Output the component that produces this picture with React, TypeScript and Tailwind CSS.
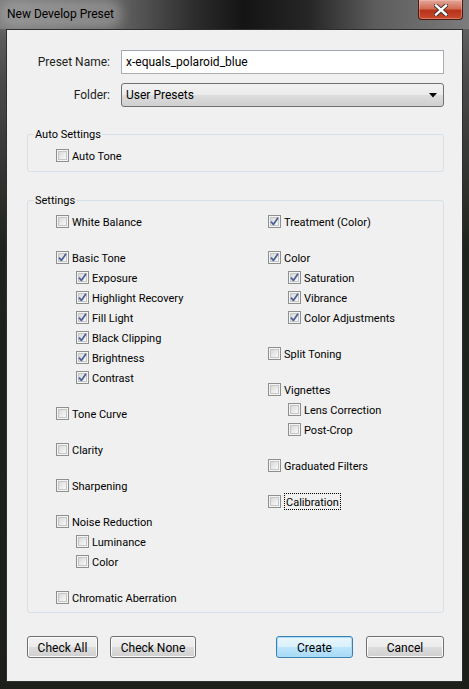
import React from 'react';

const FONT = "font-['Roboto','Noto_Sans',sans-serif] text-[11px]";

function Check({ checked }: { checked?: boolean }) {
  return (
    <span className="relative w-[13px] h-[13px] shrink-0 border border-[#8e8f8f] bg-[#f4f4f4] flex items-center justify-center">
      <span className="absolute inset-[1px] border border-[#c6c6c6] bg-[linear-gradient(135deg,#d9d9d9_0%,#ececec_60%,#f8f8f8_100%)]" />
      {checked && (
        <svg className="relative" width="9" height="9" viewBox="0 0 9 9">
          <path d="M1 4.6 L3.4 7.4 L8 0.8" fill="none" stroke="#4a5f97" strokeWidth="1.7" strokeLinejoin="round" />
        </svg>
      )}
    </span>
  );
}

interface Item {
  label: string;
  checked?: boolean;
  sub?: boolean;
  focus?: boolean;
}

function Row({ item }: { item: Item }) {
  return (
    <div className={`h-[20px] flex items-center ${item.sub ? 'pl-[20px]' : ''}`}>
      <Check checked={item.checked} />
      <span
        className={`ml-[3px] pt-[2px] leading-[13px] text-black ${
          item.focus ? 'border border-dotted border-black px-[1px]' : ''
        }`}
      >
        {item.label}
      </span>
    </div>
  );
}

function Group({ items }: { items: Item[] }) {
  return (
    <div className="flex flex-col">
      {items.map(it => (
        <Row key={it.label} item={it} />
      ))}
    </div>
  );
}

const left: Item[][] = [
  [{ label: 'White Balance' }],
  [
    { label: 'Basic Tone', checked: true },
    { label: 'Exposure', checked: true, sub: true },
    { label: 'Highlight Recovery', checked: true, sub: true },
    { label: 'Fill Light', checked: true, sub: true },
    { label: 'Black Clipping', checked: true, sub: true },
    { label: 'Brightness', checked: true, sub: true },
    { label: 'Contrast', checked: true, sub: true },
  ],
  [{ label: 'Tone Curve' }],
  [{ label: 'Clarity' }],
  [{ label: 'Sharpening' }],
  [
    { label: 'Noise Reduction' },
    { label: 'Luminance', sub: true },
    { label: 'Color', sub: true },
  ],
  [{ label: 'Chromatic Aberration' }],
];

const right: Item[][] = [
  [{ label: 'Treatment (Color)', checked: true }],
  [
    { label: 'Color', checked: true },
    { label: 'Saturation', checked: true, sub: true },
    { label: 'Vibrance', checked: true, sub: true },
    { label: 'Color Adjustments', checked: true, sub: true },
  ],
  [{ label: 'Split Toning' }],
  [
    { label: 'Vignettes' },
    { label: 'Lens Correction', sub: true },
    { label: 'Post-Crop', sub: true },
  ],
  [{ label: 'Graduated Filters' }],
  [{ label: 'Calibration', focus: true }],
];

function Button({ label, width, primary }: { label: string; width: string; primary?: boolean }) {
  return (
    <button
      className={`${width} h-[22px] rounded-[3px] border text-black text-[12px] leading-none pt-[1px] ${
        primary
          ? 'border-[#3c7fb1] bg-[linear-gradient(to_bottom,#eaf6fd_0%,#d9f0fc_50%,#bee6fd_50%,#a7d9f5_100%)] shadow-[inset_0_0_0_1px_#a9def8]'
          : 'border-[#707070] bg-[linear-gradient(to_bottom,#f2f2f2_0%,#ebebeb_50%,#dddddd_50%,#cfcfcf_100%)] shadow-[inset_0_0_0_1px_#fbfbfb]'
      }`}
    >
      {label}
    </button>
  );
}

function GroupBox({ title, className, children }: { title: string; className?: string; children: React.ReactNode }) {
  return (
    <div className={`relative border border-[#d5dfe5] rounded-[3px] ${className ?? ''}`}>
      <span className="absolute -top-[8px] left-[6px] px-[1px] bg-[#f0f0f0] text-black leading-[16px]">{title}</span>
      {children}
    </div>
  );
}

export default function App() {
  return (
    <div
      className={`${FONT} w-[469px] h-[689px] flex flex-col bg-[linear-gradient(to_bottom,#6c6c6c_0px,#4a4a4a_80px,#1f231d_250px,#1c1f1a_100%)]`}
    >
      {/* title bar */}
      <div className="h-[29px] flex items-start justify-between bg-[linear-gradient(to_right,#7e7e7e_0%,#646464_25%,#2b2b2b_42%,#141414_52%,#262626_66%,#5c5c5c_80%,#7c7c7c_100%)]">
        <div className="pl-[7px] pt-[5px]">
          <span className="text-black text-[12px] leading-[18px] rounded-[9px] bg-[#b8b8b8]/40 shadow-[0_0_12px_7px_rgba(175,175,175,0.55)]">
            New Develop Preset
          </span>
        </div>
        <div className="mr-[6px] w-[45px] h-[20px] rounded-b-[4px] border border-t-0 border-[#4a1a14] flex items-center justify-center bg-[linear-gradient(to_bottom,#e3a89a_0%,#d26c55_45%,#b8331b_55%,#c84a2c_100%)] shadow-[inset_0_0_0_1px_rgba(255,210,200,0.35)]">
          <svg width="14" height="12" viewBox="0 0 14 12">
            <path d="M2 1.5 L12 10.5 M12 1.5 L2 10.5" stroke="#3a2a2a" strokeWidth="4.2" strokeLinecap="square" />
            <path d="M2 1.5 L12 10.5 M12 1.5 L2 10.5" stroke="#ffffff" strokeWidth="2.4" strokeLinecap="square" />
          </svg>
        </div>
      </div>

      {/* client area */}
      <div className="mx-[6px] h-[653px] border border-[#2e2e2e] bg-[#f0f0f0] pl-[20px] pr-[18px] pt-[20px] flex flex-col">
        <div className="flex items-center h-[24px]">
          <span className="w-[83px] text-right text-[12px] text-[#1e1e1e]">Preset Name:</span>
          <div className="ml-[11px] flex-1 h-[24px] border border-[#abadb3] border-t-[#9fa5b0] bg-white flex items-center pl-[4px] text-[12px] text-black">
            x-equals_polaroid_blue
          </div>
        </div>
        <div className="flex items-center h-[24px] mt-[9px]">
          <span className="w-[83px] text-right text-[12px] text-[#1e1e1e]">Folder:</span>
          <div className="ml-[11px] flex-1 h-[24px] rounded-[3px] border border-[#707070] bg-[linear-gradient(to_bottom,#f2f2f2_0%,#ebebeb_50%,#dddddd_50%,#cfcfcf_100%)] flex items-center pl-[4px] pr-[6px] text-[12px] text-black">
            <span className="flex-1">User Presets</span>
            <svg width="8" height="5" viewBox="0 0 8 5">
              <path d="M0 0 H8 L4 4.5 Z" fill="#000" />
            </svg>
          </div>
        </div>

        <GroupBox title="Auto Settings" className="mt-[27px] h-[38px] pt-[10px] pl-[28px]">
          <Row item={{ label: 'Auto Tone' }} />
        </GroupBox>

        <GroupBox title="Settings" className="mt-[28px] pt-[10px] pb-[5px] pl-[28px] grid grid-cols-[212px_1fr]">
          <div className="flex flex-col gap-[16px]">
            {left.map((g, i) => (
              <Group key={i} items={g} />
            ))}
          </div>
          <div className="flex flex-col gap-[16px]">
            {right.map((g, i) => (
              <Group key={i} items={g} />
            ))}
          </div>
        </GroupBox>

        <div className="mt-[23px] flex items-center">
          <Button label="Check All" width="w-[71px]" />
          <div className="ml-[12px]">
            <Button label="Check None" width="w-[86px]" />
          </div>
          <div className="flex-1" />
          <Button label="Create" width="w-[77px]" primary />
          <div className="ml-[13px]">
            <Button label="Cancel" width="w-[78px]" />
          </div>
        </div>
      </div>
    </div>
  );
}
